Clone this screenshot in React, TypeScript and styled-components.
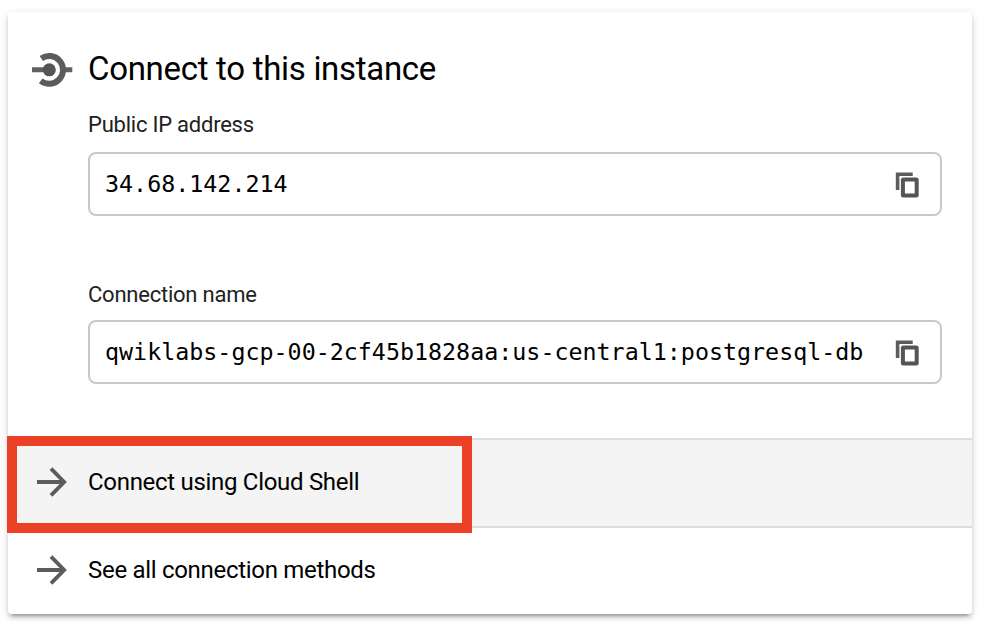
import React from "react";
import styled, { createGlobalStyle } from "styled-components";

const GlobalStyle = createGlobalStyle`
  * { box-sizing: border-box; }
  body {
    margin: 0;
    background: #fff;
    color: #000;
    font-family: Roboto, "Liberation Sans", sans-serif;
  }
`;

const Page = styled.main`
  height: 634px;
  padding: 12px 16px 20px 8px;
  overflow: hidden;
`;

const Card = styled.section`
  height: 602px;
  display: flex;
  flex-direction: column;
  background: #fff;
  border-radius: 4px;
  box-shadow:
    0 6px 2px -4px rgba(0, 0, 0, 0.2),
    0 4px 4px rgba(0, 0, 0, 0.14),
    0 2px 10px rgba(0, 0, 0, 0.12);
`;

const Header = styled.header`
  height: 92px;
  padding: 36px 24px 0;
  display: flex;
  gap: 16px;
`;

const HeaderIcon = styled.svg`
  width: 40px;
  height: 44px;
  flex: none;
  overflow: visible;
`;

const Title = styled.h1`
  margin: 0;
  font-size: 33px;
  letter-spacing: -0.3px;
  line-height: 41px;
  font-weight: 400;
  white-space: nowrap;
`;

const Field = styled.div<{ $height: number }>`
  height: ${(p) => p.$height}px;
  flex: none;
  padding: 0 30px 0 80px;
`;

const Label = styled.div<{ $height: number }>`
  height: ${(p) => p.$height}px;
  font-size: 22px;
  letter-spacing: -0.23px;
  line-height: 42px;
  color: #212121;
`;

const ValueBox = styled.div`
  height: 64px;
  display: flex;
  align-items: center;
  justify-content: space-between;
  padding: 0 19px 0 15px;
  border: 2px solid #c8c8c8;
  border-radius: 8px;
`;

const Value = styled.span`
  font-family: "DejaVu Sans Mono", "Liberation Mono", monospace;
  font-size: 23.34px;
  line-height: 32px;
  white-space: nowrap;
`;

const CopyButton = styled.button`
  display: flex;
  padding: 2px 0 0;
  border: 0;
  background: none;
`;

const ActionRow = styled.div<{ $highlighted?: boolean }>`
  position: relative;
  flex: none;
  display: flex;
  align-items: center;
  gap: 21px;
  height: ${(p) => (p.$highlighted ? 90 : 86)}px;
  padding: 0 0 2px 29px;
  font-size: 24px;
  letter-spacing: -0.3px;
  background: ${(p) => (p.$highlighted ? "#f4f4f4" : "transparent")};
  border: 0 solid #dedede;
  border-width: ${(p) => (p.$highlighted ? "2px 0" : "0")};
`;

const ActionText = styled.span`
  line-height: 32px;
  white-space: nowrap;
`;

const Marker = styled.div`
  position: absolute;
  top: -4px;
  left: -1px;
  width: 465px;
  height: 97px;
  border: 10px solid #ec4126;
`;

const ConnectIcon = () => (
  <HeaderIcon viewBox="32 48 40 44" aria-hidden="true">
    <path d="M32 69.8H48M65 69.8H72.3" stroke="#616161" strokeWidth="5" />
    <path d="M41.3 58.4A13.9 13.9 0 1 1 40.7 80.9" fill="none" stroke="#5c5c5c" strokeWidth="6" />
    <circle cx="49.3" cy="69.8" r="6.5" fill="#555" />
  </HeaderIcon>
);

const CopyIcon = () => (
  <svg width="26" height="26" viewBox="0 0 26 26" aria-hidden="true">
    <path d="M2.6 18V2.2H17.7" fill="none" stroke="#5c5c5c" strokeWidth="3.6" />
    <rect x="7.9" y="7.5" width="13.8" height="16" rx=".5" fill="none" stroke="#555" strokeWidth="4" />
  </svg>
);

const ArrowIcon = () => (
  <svg width="30" height="30" viewBox="0 0 30 30" aria-hidden="true">
    <path d="M0 15H26.5M14 1.6 27.2 15 14 28.4" fill="none" stroke="#5c5c5c" strokeWidth="3.8" />
  </svg>
);

interface CopyFieldProps {
  label: string;
  value: string;
  labelHeight: number;
  height: number;
}

const CopyField = ({ label, value, labelHeight, height }: CopyFieldProps) => (
  <Field $height={height}>
    <Label $height={labelHeight}>{label}</Label>
    <ValueBox>
      <Value>{value}</Value>
      <CopyButton aria-label={`Copy ${label}`}>
        <CopyIcon />
      </CopyButton>
    </ValueBox>
  </Field>
);

export default function App() {
  return (
    <Page>
      <GlobalStyle />
      <Card>
        <Header>
          <ConnectIcon />
          <Title>Connect to this instance</Title>
        </Header>
        <CopyField label="Public IP address" value="34.68.142.214" labelHeight={48} height={170} />
        <CopyField
          label="Connection name"
          value="qwiklabs-gcp-00-2cf45b1828aa:us-central1:postgresql-db"
          labelHeight={46}
          height={164}
        />
        <ActionRow $highlighted>
          <ArrowIcon />
          <ActionText>Connect using Cloud Shell</ActionText>
          <Marker />
        </ActionRow>
        <ActionRow>
          <ArrowIcon />
          <ActionText>See all connection methods</ActionText>
        </ActionRow>
      </Card>
    </Page>
  );
}
